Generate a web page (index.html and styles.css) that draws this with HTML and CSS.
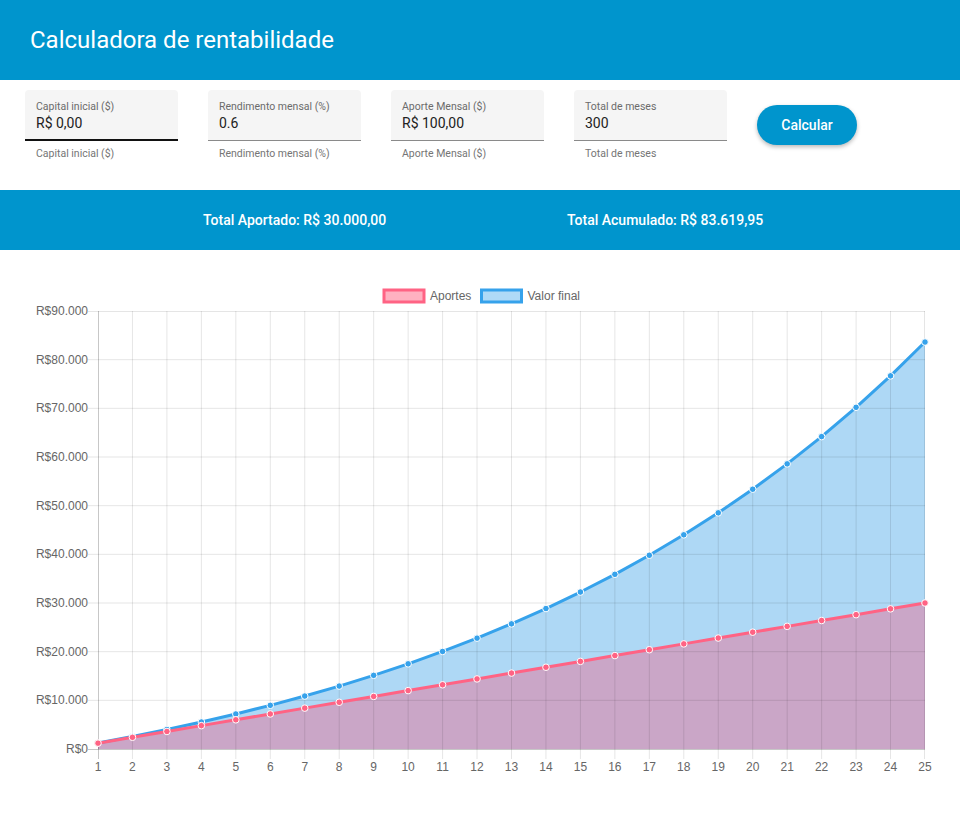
FILE: index.html
```html
<!DOCTYPE html>
<html lang="pt-BR">
<head>
<meta charset="utf-8">
<title>Calculadora de rentabilidade</title>
<link rel="stylesheet" href="styles.css">
</head>
<body>
<header class="topbar">
  <h1 class="title">Calculadora de rentabilidade</h1>
</header>

<section class="form-row">
  <div class="field field-focused">
    <div class="field-box">
      <div class="field-label">Capital inicial ($)</div>
      <div class="field-value">R$ 0,00</div>
    </div>
    <div class="field-hint">Capital inicial ($)</div>
  </div>
  <div class="field">
    <div class="field-box">
      <div class="field-label">Rendimento mensal (%)</div>
      <div class="field-value">0.6</div>
    </div>
    <div class="field-hint">Rendimento mensal (%)</div>
  </div>
  <div class="field">
    <div class="field-box">
      <div class="field-label">Aporte Mensal ($)</div>
      <div class="field-value">R$ 100,00</div>
    </div>
    <div class="field-hint">Aporte Mensal ($)</div>
  </div>
  <div class="field">
    <div class="field-box">
      <div class="field-label">Total de meses</div>
      <div class="field-value">300</div>
    </div>
    <div class="field-hint">Total de meses</div>
  </div>
  <button class="btn-calc" type="button">Calcular</button>
</section>

<section class="totals">
  <span class="total total-first">Total Aportado: R$ 30.000,00</span>
  <span class="total">Total Acumulado: R$ 83.619,95</span>
</section>

<section class="chart">
<svg class="chart-svg" width="960" height="565" viewBox="0 250 960 565" xmlns="http://www.w3.org/2000/svg">
  <defs>
    <marker id="mb" markerWidth="10" markerHeight="10" refX="5" refY="5" markerUnits="userSpaceOnUse">
      <circle cx="5" cy="5" r="3.3" fill="#36a2eb" stroke="#ffffff" stroke-width="1"/>
    </marker>
    <marker id="mp" markerWidth="10" markerHeight="10" refX="5" refY="5" markerUnits="userSpaceOnUse">
      <circle cx="5" cy="5" r="3.3" fill="#ff6384" stroke="#ffffff" stroke-width="1"/>
    </marker>
  </defs>

  <!-- legend -->
  <rect x="384" y="290" width="40" height="12" fill="#ffb1c1" stroke="#ff6384" stroke-width="3"/>
  <text class="lg" x="430" y="300">Aportes</text>
  <rect x="481.5" y="290" width="40" height="12" fill="#afdaf7" stroke="#36a2eb" stroke-width="3"/>
  <text class="lg" x="527.5" y="300">Valor final</text>

  <!-- fills -->
  <polygon fill="#aed8f5" points="98,742.96 132.46,736.48 166.92,729.51 201.38,722.02 235.83,713.98 270.29,705.33 304.75,696.05 339.21,686.07 373.67,675.35 408.13,663.83 442.58,651.46 477.04,638.16 511.5,623.87 545.96,608.53 580.42,592.03 614.88,574.32 649.33,555.28 683.79,534.82 718.25,512.85 752.71,489.23 787.17,463.87 821.63,436.61 856.08,407.32 890.54,375.86 925,342.05 925,749 98,749"/>
  <polygon fill="#caa6c7" points="98,743.16 132.46,737.32 166.92,731.48 201.38,725.64 235.83,719.8 270.29,713.96 304.75,708.12 339.21,702.28 373.67,696.44 408.13,690.6 442.58,684.76 477.04,678.92 511.5,673.08 545.96,667.24 580.42,661.4 614.88,655.56 649.33,649.72 683.79,643.88 718.25,638.04 752.71,632.2 787.17,626.36 821.63,620.52 856.08,614.68 890.54,608.84 925,603 925,749 98,749"/>

  <!-- grid -->
  <g class="grid">
    <line x1="88" y1="311.5" x2="925" y2="311.5"/>
    <line x1="88" y1="359.67" x2="925" y2="359.67"/>
    <line x1="88" y1="408.33" x2="925" y2="408.33"/>
    <line x1="88" y1="457" x2="925" y2="457"/>
    <line x1="88" y1="505.67" x2="925" y2="505.67"/>
    <line x1="88" y1="554.33" x2="925" y2="554.33"/>
    <line x1="88" y1="603" x2="925" y2="603"/>
    <line x1="88" y1="651.67" x2="925" y2="651.67"/>
    <line x1="88" y1="700.33" x2="925" y2="700.33"/>
    <line x1="132.46" y1="311" x2="132.46" y2="759"/>
    <line x1="166.92" y1="311" x2="166.92" y2="759"/>
    <line x1="201.38" y1="311" x2="201.38" y2="759"/>
    <line x1="235.83" y1="311" x2="235.83" y2="759"/>
    <line x1="270.29" y1="311" x2="270.29" y2="759"/>
    <line x1="304.75" y1="311" x2="304.75" y2="759"/>
    <line x1="339.21" y1="311" x2="339.21" y2="759"/>
    <line x1="373.67" y1="311" x2="373.67" y2="759"/>
    <line x1="408.13" y1="311" x2="408.13" y2="759"/>
    <line x1="442.58" y1="311" x2="442.58" y2="759"/>
    <line x1="477.04" y1="311" x2="477.04" y2="759"/>
    <line x1="511.5" y1="311" x2="511.5" y2="759"/>
    <line x1="545.96" y1="311" x2="545.96" y2="759"/>
    <line x1="580.42" y1="311" x2="580.42" y2="759"/>
    <line x1="614.88" y1="311" x2="614.88" y2="759"/>
    <line x1="649.33" y1="311" x2="649.33" y2="759"/>
    <line x1="683.79" y1="311" x2="683.79" y2="759"/>
    <line x1="718.25" y1="311" x2="718.25" y2="759"/>
    <line x1="752.71" y1="311" x2="752.71" y2="759"/>
    <line x1="787.17" y1="311" x2="787.17" y2="759"/>
    <line x1="821.63" y1="311" x2="821.63" y2="759"/>
    <line x1="856.08" y1="311" x2="856.08" y2="759"/>
    <line x1="890.54" y1="311" x2="890.54" y2="759"/>
    <line x1="924.5" y1="311" x2="924.5" y2="759"/>
  </g>
  <g class="axis">
    <line x1="98.5" y1="311" x2="98.5" y2="759"/>
    <line x1="88" y1="749.5" x2="925" y2="749.5"/>
  </g>

  <!-- y labels -->
  <g class="ylab">
    <text x="88" y="315">R$90.000</text>
    <text x="88" y="363.7">R$80.000</text>
    <text x="88" y="412.3">R$70.000</text>
    <text x="88" y="461">R$60.000</text>
    <text x="88" y="509.7">R$50.000</text>
    <text x="88" y="558.3">R$40.000</text>
    <text x="88" y="607">R$30.000</text>
    <text x="88" y="655.7">R$20.000</text>
    <text x="88" y="704.3">R$10.000</text>
    <text x="88" y="753">R$0</text>
  </g>

  <!-- x labels -->
  <g class="xlab">
    <text x="98" y="771">1</text>
    <text x="132.46" y="771">2</text>
    <text x="166.92" y="771">3</text>
    <text x="201.38" y="771">4</text>
    <text x="235.83" y="771">5</text>
    <text x="270.29" y="771">6</text>
    <text x="304.75" y="771">7</text>
    <text x="339.21" y="771">8</text>
    <text x="373.67" y="771">9</text>
    <text x="408.13" y="771">10</text>
    <text x="442.58" y="771">11</text>
    <text x="477.04" y="771">12</text>
    <text x="511.5" y="771">13</text>
    <text x="545.96" y="771">14</text>
    <text x="580.42" y="771">15</text>
    <text x="614.88" y="771">16</text>
    <text x="649.33" y="771">17</text>
    <text x="683.79" y="771">18</text>
    <text x="718.25" y="771">19</text>
    <text x="752.71" y="771">20</text>
    <text x="787.17" y="771">21</text>
    <text x="821.63" y="771">22</text>
    <text x="856.08" y="771">23</text>
    <text x="890.54" y="771">24</text>
    <text x="925" y="771">25</text>
  </g>

  <!-- lines -->
  <polyline class="line-blue" marker-start="url(#mb)" marker-mid="url(#mb)" marker-end="url(#mb)" points="98,742.96 132.46,736.48 166.92,729.51 201.38,722.02 235.83,713.98 270.29,705.33 304.75,696.05 339.21,686.07 373.67,675.35 408.13,663.83 442.58,651.46 477.04,638.16 511.5,623.87 545.96,608.53 580.42,592.03 614.88,574.32 649.33,555.28 683.79,534.82 718.25,512.85 752.71,489.23 787.17,463.87 821.63,436.61 856.08,407.32 890.54,375.86 925,342.05"/>
  <polyline class="line-pink" marker-start="url(#mp)" marker-mid="url(#mp)" marker-end="url(#mp)" points="98,743.16 132.46,737.32 166.92,731.48 201.38,725.64 235.83,719.8 270.29,713.96 304.75,708.12 339.21,702.28 373.67,696.44 408.13,690.6 442.58,684.76 477.04,678.92 511.5,673.08 545.96,667.24 580.42,661.4 614.88,655.56 649.33,649.72 683.79,643.88 718.25,638.04 752.71,632.2 787.17,626.36 821.63,620.52 856.08,614.68 890.54,608.84 925,603"/>
</svg>
</section>
</body>
</html>
```

FILE: styles.css
```css
* { box-sizing: border-box; }

html, body {
  margin: 0;
  padding: 0;
  background: #ffffff;
}

body {
  font-family: Roboto, "Noto Sans", "Liberation Sans", sans-serif;
  color: #212121;
  width: 960px;
  overflow: hidden;
}

.topbar {
  height: 80px;
  background: #0095cd;
  display: flex;
  align-items: center;
  padding-left: 30px;
}

.title {
  margin: 0;
  font-size: 24px;
  font-weight: 400;
  line-height: 80px;
  color: #ffffff;
}

.form-row {
  height: 110px;
  display: flex;
  align-items: flex-start;
  gap: 30px;
  padding: 10px 0 0 25px;
}

.field {
  width: 153px;
}

.field-box {
  height: 51px;
  background: #f5f5f5;
  border-radius: 4px 4px 0 0;
  border-bottom: 1px solid #8a8a8a;
  padding: 10px 11px 0;
}

.field-focused .field-box {
  border-bottom: 2px solid #111111;
}

.field-label {
  font-size: 10.5px;
  line-height: 14px;
  color: #6b6b6b;
  white-space: nowrap;
}

.field-value {
  font-size: 14px;
  line-height: 19px;
  color: #222222;
  white-space: nowrap;
}

.field-hint {
  margin-top: 6px;
  padding-left: 11px;
  font-size: 10.5px;
  line-height: 14px;
  color: #757575;
  white-space: nowrap;
}

.btn-calc {
  margin-top: 15px;
  width: 100px;
  height: 40px;
  border: none;
  border-radius: 20px;
  background: #0095cd;
  color: #ffffff;
  font-family: Roboto, "Noto Sans", "Liberation Sans", sans-serif;
  font-size: 14px;
  font-weight: 500;
  box-shadow: 0 2px 4px rgba(0, 0, 0, 0.28);
  padding: 0;
}

.totals {
  height: 60px;
  background: #0095cd;
  display: flex;
  align-items: center;
  padding-left: 203px;
}

.total {
  font-size: 14px;
  font-weight: 500;
  color: #ffffff;
  white-space: nowrap;
}

.total-first {
  width: 364px;
}

.chart {
  height: 565px;
}

.chart-svg {
  display: block;
}

.lg {
  font-family: "Liberation Sans", Arial, sans-serif;
  font-size: 12px;
  fill: #666666;
}

.grid line {
  stroke: rgba(0, 0, 0, 0.1);
  stroke-width: 1;
}

.axis line {
  stroke: rgba(0, 0, 0, 0.22);
  stroke-width: 1;
}

.ylab text {
  font-family: "Liberation Sans", Arial, sans-serif;
  font-size: 12px;
  fill: #666666;
  text-anchor: end;
}

.xlab text {
  font-family: "Liberation Sans", Arial, sans-serif;
  font-size: 12px;
  fill: #666666;
  text-anchor: middle;
}

.line-blue {
  fill: none;
  stroke: #36a2eb;
  stroke-width: 3;
  stroke-linejoin: round;
}

.line-pink {
  fill: none;
  stroke: #ff6384;
  stroke-width: 3;
  stroke-linejoin: round;
}
```
